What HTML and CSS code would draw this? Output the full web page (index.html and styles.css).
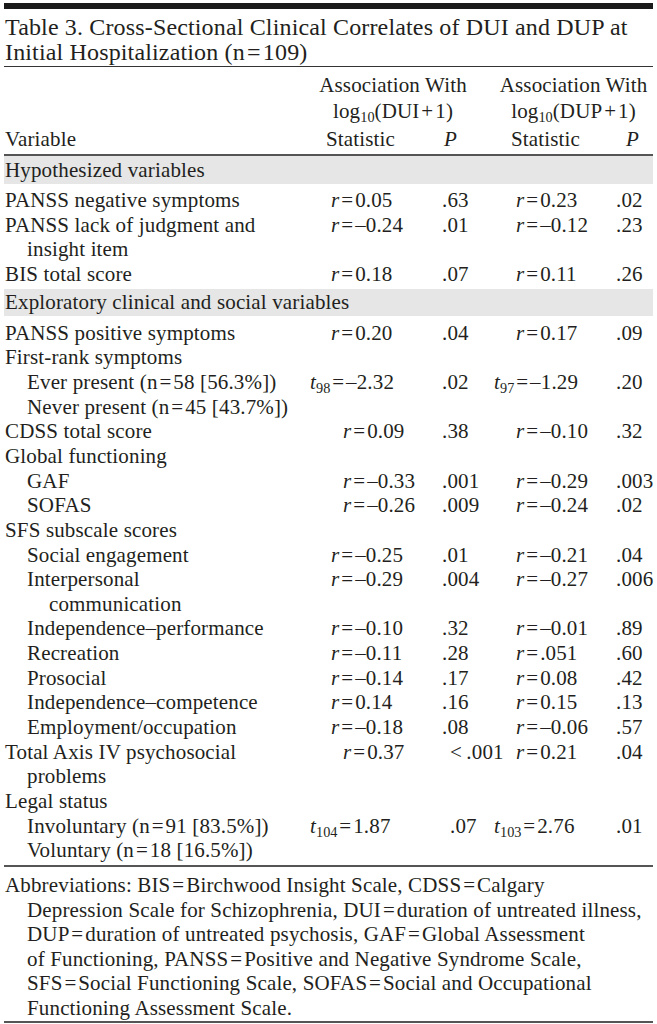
FILE: index.html
```html
<!DOCTYPE html>
<html lang="en">
<head>
<meta charset="utf-8">
<title>Table 3</title>
<link rel="stylesheet" href="styles.css">
</head>
<body>
<div class="page">
  <div class="topbar"></div>
  <h1 class="title">Table 3. Cross-Sectional Clinical Correlates of DUI and DUP at<br>Initial Hospitalization (n&#8202;=&#8202;109)</h1>
  <table class="tbl">
    <colgroup>
      <col class="c-var"><col class="c-s1"><col class="c-p1"><col class="c-s2"><col class="c-p2">
    </colgroup>
    <thead>
      <tr class="h1">
        <th></th>
        <th colspan="2" class="grp grp1">Association With</th>
        <th colspan="2" class="grp grp2">Association With</th>
      </tr>
      <tr class="h2">
        <th></th>
        <th colspan="2" class="grp grp1">log<sub>10</sub>(DUI&#8202;+&#8202;1)</th>
        <th colspan="2" class="grp grp2">log<sub>10</sub>(DUP&#8202;+&#8202;1)</th>
      </tr>
      <tr class="h3">
        <th class="var">Variable</th>
        <th class="hs1">Statistic</th>
        <th class="hp1"><i>P</i></th>
        <th class="hs2">Statistic</th>
        <th class="hp2"><i>P</i></th>
      </tr>
    </thead>
    <tbody>
      <tr class="sec"><td colspan="5">Hypothesized variables</td></tr>
      <tr class="first">
        <td class="var">PANSS negative symptoms</td>
        <td class="s1"><i>r</i>&#8202;=&#8202;0.05</td><td class="p1">.63</td>
        <td class="s2"><i>r</i>&#8202;=&#8202;0.23</td><td class="p2">.02</td>
      </tr>
      <tr>
        <td class="var">PANSS lack of judgment and<br>insight item</td>
        <td class="s1"><i>r</i>&#8202;=&#8202;–0.24</td><td class="p1">.01</td>
        <td class="s2"><i>r</i>&#8202;=&#8202;–0.12</td><td class="p2">.23</td>
      </tr>
      <tr class="last">
        <td class="var">BIS total score</td>
        <td class="s1"><i>r</i>&#8202;=&#8202;0.18</td><td class="p1">.07</td>
        <td class="s2"><i>r</i>&#8202;=&#8202;0.11</td><td class="p2">.26</td>
      </tr>
      <tr class="sec sec2"><td colspan="5">Exploratory clinical and social variables</td></tr>
      <tr class="first first2">
        <td class="var">PANSS positive symptoms</td>
        <td class="s1"><i>r</i>&#8202;=&#8202;0.20</td><td class="p1">.04</td>
        <td class="s2"><i>r</i>&#8202;=&#8202;0.17</td><td class="p2">.09</td>
      </tr>
      <tr>
        <td class="var">First-rank symptoms</td>
        <td></td><td></td><td></td><td></td>
      </tr>
      <tr>
        <td class="var sub">Ever present (n&#8202;=&#8202;58 [56.3%])</td>
        <td class="s1 t"><i>t</i><sub>98</sub>&#8202;=&#8202;–2.32</td><td class="p1">.02</td>
        <td class="s2 t"><i>t</i><sub>97</sub>&#8202;=&#8202;–1.29</td><td class="p2">.20</td>
      </tr>
      <tr>
        <td class="var sub">Never present (n&#8202;=&#8202;45 [43.7%])</td>
        <td></td><td></td><td></td><td></td>
      </tr>
      <tr>
        <td class="var">CDSS total score</td>
        <td class="s1 off"><i>r</i>&#8202;=&#8202;0.09</td><td class="p1">.38</td>
        <td class="s2"><i>r</i>&#8202;=&#8202;–0.10</td><td class="p2">.32</td>
      </tr>
      <tr>
        <td class="var">Global functioning</td>
        <td></td><td></td><td></td><td></td>
      </tr>
      <tr>
        <td class="var sub">GAF</td>
        <td class="s1 off"><i>r</i>&#8202;=&#8202;–0.33</td><td class="p1">.001</td>
        <td class="s2"><i>r</i>&#8202;=&#8202;–0.29</td><td class="p2">.003</td>
      </tr>
      <tr>
        <td class="var sub">SOFAS</td>
        <td class="s1 off"><i>r</i>&#8202;=&#8202;–0.26</td><td class="p1">.009</td>
        <td class="s2"><i>r</i>&#8202;=&#8202;–0.24</td><td class="p2">.02</td>
      </tr>
      <tr>
        <td class="var">SFS subscale scores</td>
        <td></td><td></td><td></td><td></td>
      </tr>
      <tr>
        <td class="var sub">Social engagement</td>
        <td class="s1"><i>r</i>&#8202;=&#8202;–0.25</td><td class="p1">.01</td>
        <td class="s2"><i>r</i>&#8202;=&#8202;–0.21</td><td class="p2">.04</td>
      </tr>
      <tr>
        <td class="var sub">Interpersonal<br>communication</td>
        <td class="s1"><i>r</i>&#8202;=&#8202;–0.29</td><td class="p1">.004</td>
        <td class="s2"><i>r</i>&#8202;=&#8202;–0.27</td><td class="p2">.006</td>
      </tr>
      <tr>
        <td class="var sub">Independence–performance</td>
        <td class="s1"><i>r</i>&#8202;=&#8202;–0.10</td><td class="p1">.32</td>
        <td class="s2"><i>r</i>&#8202;=&#8202;–0.01</td><td class="p2">.89</td>
      </tr>
      <tr>
        <td class="var sub">Recreation</td>
        <td class="s1"><i>r</i>&#8202;=&#8202;–0.11</td><td class="p1">.28</td>
        <td class="s2"><i>r</i>&#8202;=&#8202;.051</td><td class="p2">.60</td>
      </tr>
      <tr>
        <td class="var sub">Prosocial</td>
        <td class="s1"><i>r</i>&#8202;=&#8202;–0.14</td><td class="p1">.17</td>
        <td class="s2"><i>r</i>&#8202;=&#8202;0.08</td><td class="p2">.42</td>
      </tr>
      <tr>
        <td class="var sub">Independence–competence</td>
        <td class="s1"><i>r</i>&#8202;=&#8202;0.14</td><td class="p1">.16</td>
        <td class="s2"><i>r</i>&#8202;=&#8202;0.15</td><td class="p2">.13</td>
      </tr>
      <tr>
        <td class="var sub">Employment/occupation</td>
        <td class="s1"><i>r</i>&#8202;=&#8202;–0.18</td><td class="p1">.08</td>
        <td class="s2"><i>r</i>&#8202;=&#8202;–0.06</td><td class="p2">.57</td>
      </tr>
      <tr>
        <td class="var">Total Axis IV psychosocial<br>problems</td>
        <td class="s1 off"><i>r</i>&#8202;=&#8202;0.37</td><td class="p1 lt">&lt;&#8201;.001</td>
        <td class="s2"><i>r</i>&#8202;=&#8202;0.21</td><td class="p2">.04</td>
      </tr>
      <tr>
        <td class="var">Legal status</td>
        <td></td><td></td><td></td><td></td>
      </tr>
      <tr>
        <td class="var sub">Involuntary (n&#8202;=&#8202;91 [83.5%])</td>
        <td class="s1 t"><i>t</i><sub>104</sub>&#8202;=&#8202;1.87</td><td class="p1 lt">.07</td>
        <td class="s2 t"><i>t</i><sub>103</sub>&#8202;=&#8202;2.76</td><td class="p2">.01</td>
      </tr>
      <tr class="end">
        <td class="var sub">Voluntary (n&#8202;=&#8202;18 [16.5%])</td>
        <td></td><td></td><td></td><td></td>
      </tr>
    </tbody>
  </table>
  <p class="notes">Abbreviations: BIS&#8202;=&#8202;Birchwood Insight Scale, CDSS&#8202;=&#8202;Calgary<br>Depression Scale for Schizophrenia, DUI&#8202;=&#8202;duration of untreated illness,<br>DUP&#8202;=&#8202;duration of untreated psychosis, GAF&#8202;=&#8202;Global Assessment<br>of Functioning, PANSS&#8202;=&#8202;Positive and Negative Syndrome Scale,<br>SFS&#8202;=&#8202;Social Functioning Scale, SOFAS&#8202;=&#8202;Social and Occupational<br>Functioning Assessment Scale.</p>
</div>
</body>
</html>
```

FILE: styles.css
```css
html, body {
  margin: 0;
  padding: 0;
  background: #ffffff;
}

body {
  color: #231f20;
  font-family: "Liberation Serif", "Times New Roman", serif;
}

.page {
  width: 649px;
  padding: 3px 4px 0 4px;
}

.topbar {
  height: 6px;
  background: #1a1a1a;
}

.title {
  margin: 0;
  padding: 6px 0 1px 1px;
  font-size: 24px;
  font-weight: normal;
  letter-spacing: 0.15px;
  line-height: 25px;
  white-space: nowrap;
  border-bottom: 1px solid #333;
}

.tbl {
  width: 100%;
  border-collapse: collapse;
  table-layout: fixed;
  font-size: 21px;
  letter-spacing: 0.15px;
  line-height: 24.65px;
}

.c-var { width: 306px; }
.c-s1 { width: 130px; }
.c-p1 { width: 54px; }
.c-s2 { width: 120px; }
.c-p2 { width: 39px; }

.tbl th,
.tbl td {
  padding: 0;
  text-align: left;
  font-weight: normal;
  vertical-align: top;
  white-space: nowrap;
}

.tbl sub {
  font-size: 0.68em;
  line-height: 0;
  vertical-align: -0.25em;
  letter-spacing: 0;
}

thead .h1 th { padding-top: 6px; }
thead .h2 th { padding-top: 1px; }
thead .h3 th { padding-top: 4px; padding-bottom: 2px; }
thead tr.h3 { border-bottom: 2px solid #555; }

.grp { text-align: center !important; }
.grp1 { padding-right: 18px !important; }

.var { padding-left: 1px !important; }
.hs1 { padding-left: 16px !important; }
.hp1 { padding-left: 4px !important; }
.hs2 { padding-left: 17px !important; }
.hp2 { padding-left: 12px !important; }

tr.sec td {
  background: #e6e6e6;
  padding: 2px 0 2px 1px;
  line-height: 24px;
  border-top: 1px solid #fff;
}

tr.sec2 td { padding-top: 1px; }

tr.first td { padding-top: 4px; }
tr.first2 td { padding-top: 5px; }
tr.last td { padding-bottom: 1px; }

td.var {
  padding-left: 23px !important;
  text-indent: -22px;
}

td.var.sub {
  padding-left: 45px !important;
  text-indent: -22px;
}

td.s1 { padding-left: 21px; }
td.s1.off { padding-left: 33px; }
td.s1.t { padding-left: 0; }
td.p1 { padding-left: 2px; }
td.p1.lt { padding-left: 10px; }
td.s2 { padding-left: 22px; }
td.s2.t { padding-left: 0; }
td.p2 { padding-left: 2px; }

tr.end { border-bottom: 2px solid #555; }
tr.end td { padding-bottom: 2px; }

.notes {
  margin: 0;
  padding: 6px 0 0 23px;
  text-indent: -22px;
  font-size: 21px;
  letter-spacing: 0.15px;
  line-height: 24.6px;
  white-space: nowrap;
  border-bottom: 2px solid #555;
}
```
